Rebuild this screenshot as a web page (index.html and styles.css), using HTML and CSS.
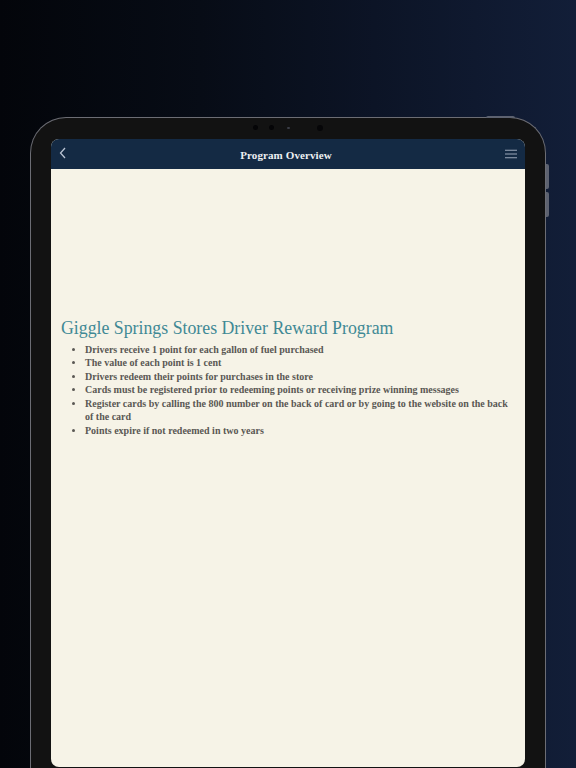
FILE: index.html
```html
<!DOCTYPE html>
<html lang="en">
<head>
<meta charset="utf-8">
<title>Program Overview</title>
<link rel="stylesheet" href="styles.css">
</head>
<body>
<div class="device">
  <span class="btn-top"></span>
  <span class="btn-side btn-side-1"></span>
  <span class="btn-side btn-side-2"></span>
  <div class="bezel-top">
    <span class="cam cam-a"></span>
    <span class="cam cam-b"></span>
    <span class="cam cam-c"></span>
    <span class="cam cam-d"></span>
  </div>
  <div class="screen">
    <header class="nav">
      <svg class="nav-back" width="8" height="12" viewBox="0 0 8 12"><path d="M6 1 L1.5 6 L6 11" fill="none" stroke="#b9c3d3" stroke-width="1.3"/></svg>
      <div class="nav-title">Program Overview</div>
      <svg class="nav-menu" width="12" height="10" viewBox="0 0 12 10"><path d="M0 1.2H12M0 5H12M0 8.8H12" stroke="#9aa6b8" stroke-width="1.1"/></svg>
    </header>
    <main class="content">
      <h1 class="title">Giggle Springs Stores Driver Reward Program</h1>
      <ul class="list">
        <li>Drivers receive 1 point for each gallon of fuel purchased</li>
        <li>The value of each point is 1 cent</li>
        <li>Drivers redeem their points for purchases in the store</li>
        <li>Cards must be registered prior to redeeming points or receiving prize winning messages</li>
        <li>Register cards by calling the 800 number on the back of card or by going to the website on the back of the card</li>
        <li>Points expire if not redeemed in two years</li>
      </ul>
    </main>
  </div>
</div>
</body>
</html>
```

FILE: styles.css
```css
html, body {
  margin: 0;
  padding: 0;
  height: 768px;
  overflow: hidden;
}
body {
  background: linear-gradient(90deg, #03050a 0%, #070c16 35%, #0c1426 65%, #121e38 100%);
  font-family: "Liberation Serif", "DejaVu Serif", serif;
}
.device {
  position: relative;
  box-sizing: border-box;
  margin: 117px 0 0 30px;
  width: 516px;
  height: 651px;
  background: #121212;
  border: 1.5px solid #6c6d74;
  border-bottom: none;
  border-radius: 36px 36px 0 0;
  padding: 0 20px 0 20px;
}
.btn-top {
  position: absolute;
  top: -2.5px;
  left: 455px;
  width: 29px;
  height: 2px;
  background: #5d6270;
  border-radius: 2px 2px 0 0;
}
.btn-side {
  position: absolute;
  right: -3.5px;
  width: 2.5px;
  background: #5d6270;
  border-radius: 0 2px 2px 0;
}
.btn-side-1 { top: 46px; height: 25px; }
.btn-side-2 { top: 74px; height: 25px; }
.bezel-top {
  position: relative;
  height: 20.5px;
}
.cam {
  position: absolute;
  border-radius: 50%;
  background: #050507;
}
.cam-a { left: 202px; top: 7px; width: 5px; height: 5px; }
.cam-b { left: 218px; top: 7px; width: 5px; height: 5px; }
.cam-c { left: 236px; top: 9px; width: 3px; height: 1.5px; background: #3a3d46; border-radius: 1px; }
.cam-d { left: 266px; top: 6.5px; width: 6px; height: 6px; background: #060608; }
.screen {
  height: 628px;
  border-radius: 8px;
  overflow: hidden;
  background: #f6f3e7;
}
.nav {
  height: 30px;
  background: #142a44;
  display: flex;
  align-items: center;
  padding: 0 8px 0 8px;
}
.nav-back {
  display: block;
  margin-top: -2px;
}
.nav-title {
  flex: 1;
  text-align: center;
  color: #eef0f2;
  font-weight: bold;
  font-size: 11px;
  padding-top: 2px;
  letter-spacing: 0.1px;
}
.nav-menu {
  display: block;
  margin-top: 1px;
}
.content {
  padding: 148px 10px 0 10px;
}
.title {
  margin: 0 0 4px 0;
  font-size: 17.8px;
  font-weight: normal;
  color: #3f8995;
  line-height: 22px;
}
.list {
  margin: 0;
  padding-left: 24px;
  color: #5a5854;
  font-weight: bold;
  font-size: 10px;
  line-height: 13.5px;
}
```
